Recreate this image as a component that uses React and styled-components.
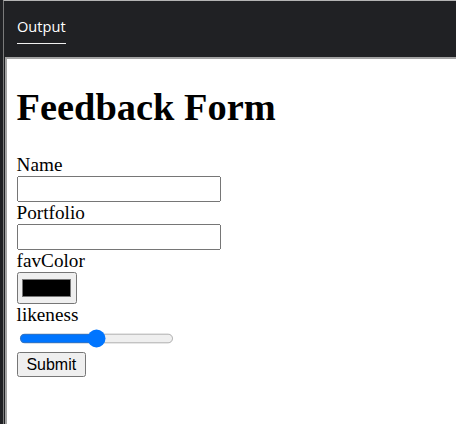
import React from "react";
import styled, { createGlobalStyle } from "styled-components";

const Global = createGlobalStyle`
  html, body { margin: 0; padding: 0; height: 100%; }
  body { background: #202124; overflow: hidden; }
  #root { height: 100%; }
`;

const Frame = styled.div`
  margin-left: 3px;
  height: 100%;
  box-sizing: border-box;
  border-left: 1px solid #7a7a7a;
  border-top: 1px solid #b4b4b4;
  display: flex;
  flex-direction: column;
`;

const Header = styled.div`
  height: 56px;
  flex: none;
  background: #202124;
  display: flex;
  align-items: flex-start;
  padding-left: 13px;
`;

const Tab = styled.div`
  margin-top: 16px;
  padding-bottom: 7px;
  border-bottom: 1px solid #f0f0f0;
  color: #ffffff;
  font-family: "Open Sans", sans-serif;
  font-size: 14.6px;
  line-height: 19px;
`;

const Panel = styled.div`
  flex: 1;
  margin-left: 1px;
  background: #ffffff;
  border-top: 2px solid #a3a3a3;
  border-left: 2px solid #a3a3a3;
  overflow: hidden;
`;

const Doc = styled.div`
  zoom: 1.2;
  display: flow-root;
  padding: 0 8px;
  font-family: "Liberation Serif", "Times New Roman", serif;
  font-size: 16px;
  color: #000;
`;

const Title = styled.h1`
  font-size: 32px;
  font-weight: bold;
  margin: 21.44px 0;
`;

const Form = styled.form`
  display: flex;
  flex-direction: column;
  align-items: flex-start;
`;

const Label = styled.label`
  display: block;
`;

const TextInput = styled.input`
  box-sizing: border-box;
  width: 170px;
  height: 21.5px;
  font-family: "Liberation Sans", Arial, sans-serif;
  font-size: 13.333px;
`;

const ColorInput = styled.input`
  font-family: "Liberation Sans", Arial, sans-serif;
  font-size: 13.333px;
`;

const Range = styled.input`
  margin: 2px 2px 3.5px;
  accent-color: #0075ff;
`;

const Button = styled.button`
  box-sizing: border-box;
  height: 21px;
  padding: 1px 6.5px;
  font-family: "Liberation Sans", Arial, sans-serif;
  font-size: 13.333px;
`;

export default function App() {
  return (
    <>
      <Global />
      <Frame>
        <Header>
          <Tab>Output</Tab>
        </Header>
        <Panel>
          <Doc>
            <Title>Feedback Form</Title>
            <Form onSubmit={(e) => e.preventDefault()}>
              <Label htmlFor="name">Name</Label>
              <TextInput id="name" type="text" />
              <Label htmlFor="portfolio">Portfolio</Label>
              <TextInput id="portfolio" type="text" />
              <Label htmlFor="fav">favColor</Label>
              <ColorInput id="fav" type="color" defaultValue="#000000" />
              <Label htmlFor="like">likeness</Label>
              <Range id="like" type="range" min="0" max="100" defaultValue="50" />
              <Button type="submit">Submit</Button>
            </Form>
          </Doc>
        </Panel>
      </Frame>
    </>
  );
}
